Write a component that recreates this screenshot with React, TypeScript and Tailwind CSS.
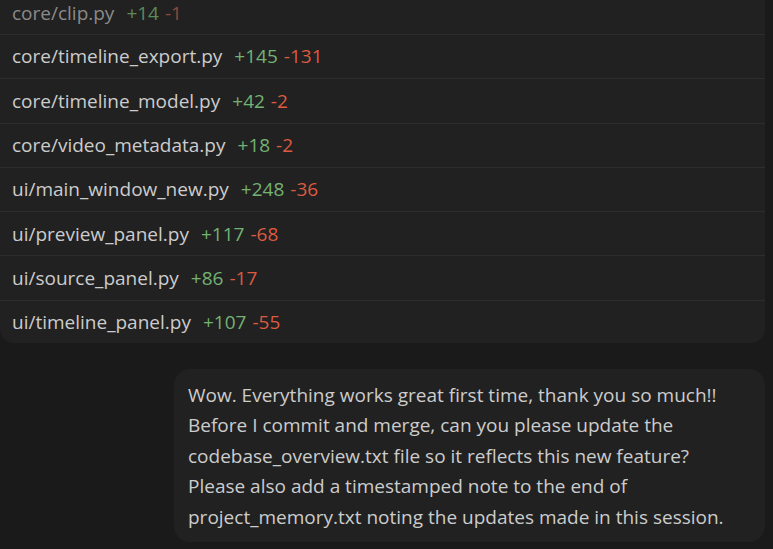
const files = [
  { name: "core/timeline_export.py", add: 145, del: 131 },
  { name: "core/timeline_model.py", add: 42, del: 2 },
  { name: "core/video_metadata.py", add: 18, del: 2 },
  { name: "ui/main_window_new.py", add: 248, del: 36 },
  { name: "ui/preview_panel.py", add: 117, del: 68 },
  { name: "ui/source_panel.py", add: 86, del: 17 },
  { name: "ui/timeline_panel.py", add: 107, del: 55 },
];

export default function App() {
  return (
    <div
      className="w-[773px] h-[549px] overflow-hidden bg-[#1a1a1a] pr-[8px] text-[19px] text-[#cccccc]"
      style={{ fontFamily: '"Open Sans", "Noto Sans", sans-serif' }}
    >
      {/* file change list */}
      <div className="-mt-[8px] bg-[#212121] rounded-b-[14px]">
        <div className="h-[43px] flex items-center px-[12px] border-b border-[#2d2d2d]">
          <span className="text-[#8a8a8a]">core/clip.py</span>
          <span className="ml-[12px] text-[#5b8a5b]">+14</span>
          <span className="ml-[6px] text-[#8e4a3d]">-1</span>
        </div>
        {files.map((f, i) => (
          <div
            key={f.name}
            className={`flex items-center px-[12px] ${i < files.length - 1 ? "h-[44.3px] border-b border-[#2d2d2d]" : "h-[42px]"}`}
          >
            <span>{f.name}</span>
            <span className="ml-[12px] text-[#73b273]">+{f.add}</span>
            <span className="ml-[6px] text-[#dc5a40]">-{f.del}</span>
          </div>
        ))}
      </div>

      {/* user message */}
      <div className="flex justify-end mt-[26px]">
        <div className="w-[591px] bg-[#212121] rounded-[16px] px-[14px] pt-[11px] pb-[10px] leading-[30.5px]">
          Wow. Everything works great first time, thank you so much!!
          <br />
          Before I commit and merge, can you please update the
          <br />
          codebase_overview.txt file so it reflects this new feature?
          <br />
          Please also add a timestamped note to the end of
          <br />
          project_memory.txt noting the updates made in this session.
        </div>
      </div>
    </div>
  );
}
